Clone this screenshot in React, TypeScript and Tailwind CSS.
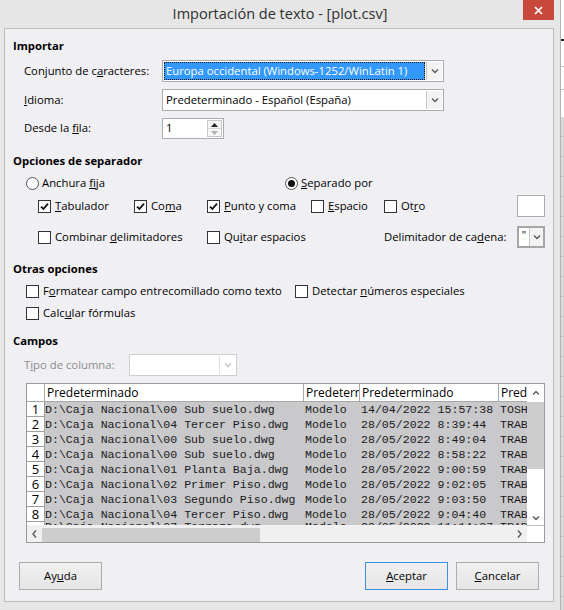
import React from "react";

type Row = { path: string; layout: string; date: string; user: string };

const rows: Row[] = [
  { path: "D:\\Caja Nacional\\00 Sub suelo.dwg", layout: "Modelo", date: "14/04/2022 15:57:38", user: "TOSH" },
  { path: "D:\\Caja Nacional\\04 Tercer Piso.dwg", layout: "Modelo", date: "28/05/2022 8:39:44", user: "TRAB" },
  { path: "D:\\Caja Nacional\\00 Sub suelo.dwg", layout: "Modelo", date: "28/05/2022 8:49:04", user: "TRAB" },
  { path: "D:\\Caja Nacional\\00 Sub suelo.dwg", layout: "Modelo", date: "28/05/2022 8:58:22", user: "TRAB" },
  { path: "D:\\Caja Nacional\\01 Planta Baja.dwg", layout: "Modelo", date: "28/05/2022 9:00:59", user: "TRAB" },
  { path: "D:\\Caja Nacional\\02 Primer Piso.dwg", layout: "Modelo", date: "28/05/2022 9:02:05", user: "TRAB" },
  { path: "D:\\Caja Nacional\\03 Segundo Piso.dwg", layout: "Modelo", date: "28/05/2022 9:03:50", user: "TRAB" },
  { path: "D:\\Caja Nacional\\04 Tercer Piso.dwg", layout: "Modelo", date: "28/05/2022 9:04:40", user: "TRAB" },
];

const lastRow: Row = { path: "D:\\Caja Nacional\\07 Terraza.dwg", layout: "Modelo", date: "28/05/2022 11:14:07", user: "TRAB" };

function Chevron({ dir = "down", color = "#5a5a5a" }: { dir?: "down" | "up" | "left" | "right"; color?: string }) {
  const d = {
    down: "M1 1.5 L4 4.5 L7 1.5",
    up: "M1 4.5 L4 1.5 L7 4.5",
    left: "M5 0.5 L2 4 L5 7.5",
    right: "M3 0.5 L6 4 L3 7.5",
  }[dir];
  const size = dir === "down" || dir === "up" ? { w: 8, h: 6 } : { w: 8, h: 8 };
  return (
    <svg width={size.w} height={size.h} viewBox={`0 0 ${size.w} ${size.h}`}>
      <path d={d} fill="none" stroke={color} strokeWidth="1.4" />
    </svg>
  );
}

function Check({ checked, children }: { checked?: boolean; children: React.ReactNode }) {
  return (
    <div className="flex items-center gap-[4px]">
      <span className="flex h-[13px] w-[13px] shrink-0 items-center justify-center border border-[#333] bg-white">
        {checked && (
          <svg width="9" height="9" viewBox="0 0 9 9">
            <path d="M1 4.6 L3.4 7 L8 1.6" fill="none" stroke="#111" strokeWidth="1.8" />
          </svg>
        )}
      </span>
      <span className="whitespace-nowrap">{children}</span>
    </div>
  );
}

function Radio({ checked, children }: { checked?: boolean; children: React.ReactNode }) {
  return (
    <div className="flex items-center gap-[3px]">
      <span className="flex h-[13px] w-[13px] shrink-0 items-center justify-center rounded-full border border-[#555] bg-white">
        {checked && <span className="h-[7px] w-[7px] rounded-full bg-[#111]" />}
      </span>
      <span className="whitespace-nowrap">{children}</span>
    </div>
  );
}

function Select({ value, focused, disabled, width }: { value: string; focused?: boolean; disabled?: boolean; width: string }) {
  return (
    <div className={`flex h-[22px] ${width} items-stretch border bg-white ${disabled ? "border-[#cfcfcf]" : "border-[#acacac]"}`}>
      <div className="flex min-w-0 flex-1 items-center p-[1px]">
        {focused ? (
          <div className="flex h-full w-full items-center border border-dotted border-[#111] bg-[#3399ff] pl-[1px] text-white">
            {value}
          </div>
        ) : (
          <span className="pl-[2px]">{value}</span>
        )}
      </div>
      <div className={`my-[1px] mr-[1px] flex w-[16px] items-center justify-center border-l ${disabled ? "border-[#e0e0e0]" : "border-[#c8c8c8] bg-[#f3f3f3]"}`}>
        <Chevron color={disabled ? "#c4c4c4" : "#5a5a5a"} />
      </div>
    </div>
  );
}

function Button({ children, primary }: { children: React.ReactNode; primary?: boolean }) {
  return (
    <button
      type="button"
      className={`flex h-[28px] w-[83px] items-center justify-center border bg-gradient-to-b from-[#f0f0f0] to-[#e6e6e6] ${
        primary ? "border-[#3c8fdd]" : "border-[#acacac]"
      }`}
    >
      {children}
    </button>
  );
}

function Cells({ r }: { r: Row }) {
  return (
    <>
      <div className="w-[260px] shrink-0 overflow-hidden whitespace-nowrap">{r.path}</div>
      <div className="w-[56px] shrink-0 overflow-hidden whitespace-nowrap">{r.layout}</div>
      <div className="w-[139px] shrink-0 overflow-hidden whitespace-nowrap">{r.date}</div>
      <div className="w-[60px] shrink-0 overflow-hidden whitespace-nowrap">{r.user}</div>
    </>
  );
}

function Preview() {
  const mono = "font-['Liberation_Mono',monospace] text-[11.6px] text-[#1a1a1a]";
  return (
    <div className="ml-[13px] flex h-[160px] w-[519px] border border-[#9a9a9a] bg-white">
      <div className="flex w-[500px] flex-col overflow-hidden">
        {/* column headers */}
        <div className="flex h-[18px] shrink-0 border-b border-[#a8a8a8] text-[12px]">
          <div className="w-[18px] shrink-0 border-r border-[#a8a8a8]" />
          {[259, 56, 139, 60].map((w, i) => (
            <div
              key={i}
              style={{ width: w }}
              className="shrink-0 overflow-hidden whitespace-nowrap border-r border-[#a8a8a8] pl-[2px] leading-[17px]"
            >
              Predeterminado
            </div>
          ))}
        </div>
        {rows.map((r, i) => (
          <div key={i} className="flex h-[15px] shrink-0">
            <div className="flex w-[18px] shrink-0 items-end justify-center border-r border-b border-[#a0a0a0] bg-white text-[13px] leading-[13px]">
              {i + 1}
            </div>
            <div className={`flex flex-1 bg-[#c9c9cc] leading-[15px] ${mono}`}>
              <Cells r={r} />
            </div>
          </div>
        ))}
        <div className="flex h-[3px] shrink-0 overflow-hidden">
          <div className="w-[18px] shrink-0 border-r border-[#a0a0a0] bg-white" />
          <div className={`flex flex-1 bg-[#c9c9cc] leading-[9px] ${mono}`}>
            <Cells r={lastRow} />
          </div>
        </div>
        {/* horizontal scrollbar */}
        <div className="flex h-[17px] shrink-0 items-stretch bg-[#f0f0f0]">
          <div className="flex w-[15px] items-center justify-center">
            <Chevron dir="left" />
          </div>
          <div className="mt-[3px] w-[218px] bg-[#cdcdcd]" />
          <div className="flex-1" />
          <div className="flex w-[17px] items-center justify-center">
            <Chevron dir="right" />
          </div>
        </div>
      </div>
      {/* vertical scrollbar */}
      <div className="flex w-[17px] flex-col">
        <div className="flex h-[18px] items-center justify-center">
          <Chevron dir="up" />
        </div>
        <div className="h-[67px] bg-[#cdcdcd]" />
        <div className="flex-1" />
        <div className="flex h-[15px] items-center justify-center">
          <Chevron dir="down" />
        </div>
        <div className="h-[17px] border-t border-[#bdbdbd] bg-white" />
      </div>
    </div>
  );
}

export default function App() {
  return (
    <div className="flex h-[610px] w-[564px] overflow-hidden bg-[#e6e6e6] font-['Open_Sans',sans-serif] text-[11.3px] text-black">
      <div className="flex w-[560px] shrink-0 flex-col">
        <div className="relative flex h-[28px] shrink-0 items-center justify-center">
          <span className="text-[14.5px] text-[#2f2f2f]">Importación de texto - [plot.csv]</span>
          <div className="absolute right-[6px] top-0 flex h-[20px] w-[31px] items-center justify-center bg-[#c9483c]">
            <svg width="9" height="9" viewBox="0 0 9 9">
              <path d="M1 1 L8 8 M8 1 L1 8" stroke="#fff" strokeWidth="1.7" />
            </svg>
          </div>
        </div>

        <div className="ml-[4px] flex h-[574px] w-[550px] flex-col border border-[#bcbcbc] bg-[#f0eff3] pl-[8px] pt-[8px]">
          <div className="flex h-[18px] items-center font-bold">Importar</div>

          <div className="ml-[11px] mt-[5px] flex items-center">
            <span className="w-[138px]">
              Conjunto de c<u>a</u>racteres:
            </span>
            <Select width="w-[282px]" value="Europa occidental (Windows-1252/WinLatin 1)" focused />
          </div>
          <div className="ml-[11px] mt-[7px] flex items-center">
            <span className="w-[138px]">
              <u>I</u>dioma:
            </span>
            <Select width="w-[282px]" value="Predeterminado - Español (España)" />
          </div>
          <div className="ml-[11px] mt-[7px] flex items-center">
            <span className="w-[138px]">
              Desde la <u>f</u>ila:
            </span>
            <div className="flex h-[21px] w-[62px] items-stretch border border-[#acacac] bg-white">
              <span className="flex flex-1 items-center pl-[3px]">1</span>
              <div className="m-[1px] flex w-[15px] flex-col border border-[#c8c8c8]">
                <div className="flex flex-1 items-center justify-center border-b border-[#d6d6d6] bg-[#f3f3f3]">
                  <svg width="7" height="4" viewBox="0 0 7 4">
                    <path d="M0 4 L3.5 0 L7 4 Z" fill="#222" />
                  </svg>
                </div>
                <div className="flex flex-1 items-center justify-center bg-[#f6f6f6]">
                  <svg width="7" height="4" viewBox="0 0 7 4">
                    <path d="M0 0 L7 0 L3.5 4 Z" fill="#b0b0b0" />
                  </svg>
                </div>
              </div>
            </div>
          </div>

          <div className="mt-[13px] flex h-[18px] items-center font-bold">Opciones de separador</div>
          <div className="ml-[13px] mt-[4px] flex h-[18px] items-center">
            <div className="w-[259px]">
              <Radio>
                Anchura <u>f</u>ija
              </Radio>
            </div>
            <Radio checked>
              <u>S</u>eparado por
            </Radio>
          </div>
          <div className="ml-[25px] mt-[3px] flex h-[22px] items-center">
            <div className="w-[96px]">
              <Check checked>
                <u>T</u>abulador
              </Check>
            </div>
            <div className="w-[73px]">
              <Check checked>
                Co<u>m</u>a
              </Check>
            </div>
            <div className="w-[104px]">
              <Check checked>
                <u>P</u>unto y coma
              </Check>
            </div>
            <div className="w-[73px]">
              <Check>
                <u>E</u>spacio
              </Check>
            </div>
            <div className="w-[133px]">
              <Check>
                Ot<u>r</u>o
              </Check>
            </div>
            <div className="h-[22px] w-[28px] border border-[#acacac] bg-white" />
          </div>
          <div className="ml-[25px] mt-[9px] flex h-[22px] items-center">
            <div className="w-[169px]">
              <Check>
                Combinar <u>d</u>elimitadores
              </Check>
            </div>
            <div className="w-[177px]">
              <Check>
                Qu<u>i</u>tar espacios
              </Check>
            </div>
            <span className="w-[133px]">
              Delimitador de ca<u>d</u>ena:
            </span>
            <div className="flex h-[22px] w-[28px] items-stretch border-2 border-[#a6a6a6] bg-white">
              <span className="flex w-[10px] items-start justify-center pt-[1px] text-[11px] leading-[12px]">"</span>
              <div className="flex flex-1 items-center justify-center border-l border-[#c8c8c8] bg-[#f3f3f3]">
                <Chevron />
              </div>
            </div>
          </div>

          <div className="mt-[12px] flex h-[18px] items-center font-bold">Otras opciones</div>
          <div className="ml-[13px] mt-[4px] flex h-[18px] items-center">
            <div className="w-[269px]">
              <Check>
                F<u>o</u>rmatear campo entrecomillado como texto
              </Check>
            </div>
            <Check>
              Detectar <u>n</u>úmeros especiales
            </Check>
          </div>
          <div className="ml-[13px] mt-[4px] flex h-[18px] items-center">
            <Check>
              Calc<u>u</u>lar fórmulas
            </Check>
          </div>

          <div className="mt-[10px] flex h-[18px] items-center font-bold">Campos</div>
          <div className="ml-[11px] mt-[4px] flex items-center text-[#8d8d8d]">
            <span className="w-[105px]">
              T<u>i</u>po de columna:
            </span>
            <Select width="w-[108px]" value="" disabled />
          </div>

          <div className="mt-[7px]">
            <Preview />
          </div>

          <div className="ml-[6px] mr-[14px] mt-[19px] flex items-center">
            <Button>
              Ay<u>u</u>da
            </Button>
            <div className="flex-1" />
            <div className="flex gap-[8px]">
              <Button primary>
                <u>A</u>ceptar
              </Button>
              <Button>
                <u>C</u>ancelar
              </Button>
            </div>
          </div>
        </div>
      </div>

      {/* sliver of the spreadsheet window behind */}
      <div className="flex w-[4px] shrink-0 flex-col border-l border-[#b5b5b5]">
        <div className="h-[39px] bg-white" />
        <div className="h-[2px] bg-[#222]" />
        <div className="h-[26px] border-b border-[#c0c0c0] bg-white" />
        <div className="h-[23px] border-b border-[#c0c0c0] bg-white" />
        <div className="h-[27px] bg-white" />
        <div className="flex-1 bg-[repeating-linear-gradient(to_bottom,#d9d9d9_0px,#d9d9d9_19px,#c6c6c6_19px,#c6c6c6_20px)]" />
      </div>
    </div>
  );
}
